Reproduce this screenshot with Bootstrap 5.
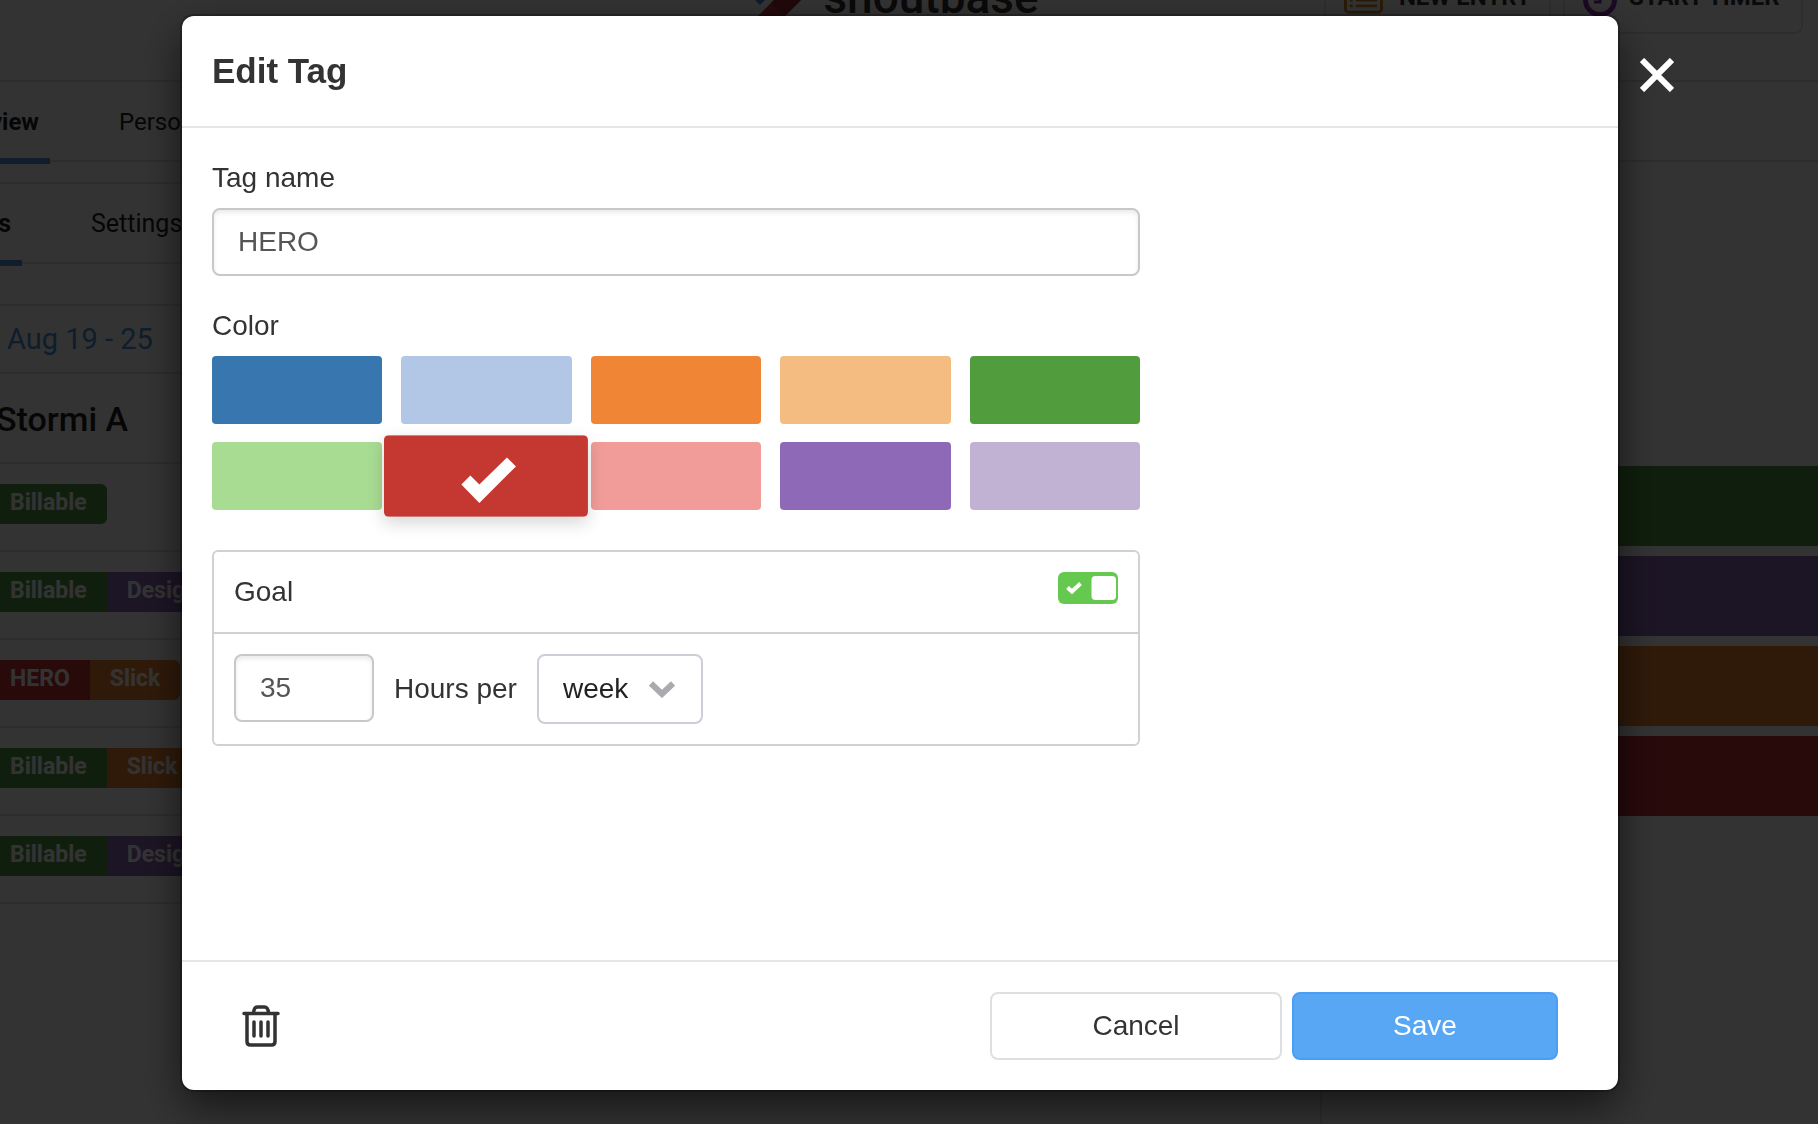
<!DOCTYPE html>
<html lang="en">
<head>
<meta charset="utf-8">
<meta name="viewport" content="width=device-width, initial-scale=1">
<title>Edit Tag</title>
<link href="https://cdn.jsdelivr.net/npm/bootstrap@5.3.0/dist/css/bootstrap.min.css" rel="stylesheet">
<style>
  body { font-family: "Liberation Sans", Arial, sans-serif; font-size: 28px; line-height: 40px; color: #333; overflow: hidden; }

  /* Page behind the dialog */
  .app-page { font-family: Roboto, "Noto Sans", sans-serif; color: #333; overflow: hidden; height: 100vh; }
  .app-header { height: 162px; margin-top: -80px; border-bottom: 2px solid #e2e2e2; padding: 0 15px; }
  .head-spacer { width: 451px; }
  .head-actions { gap: 12px; }
  .brand-name { font-size: 46px; font-weight: 500; line-height: 56px; color: #333; text-decoration: none; }
  .brand-name span { padding-bottom: 6px; }
  .head-btn { width: 227px; height: 68px; border: 2px solid #e2e2e2; border-radius: 8px; font-size: 24px; font-weight: 700; line-height: 32px; color: #333; text-transform: uppercase; white-space: nowrap; padding: 0 18px; }
  .head-btn span { padding-bottom: 6px; }
  .head-btn-wide { width: 240px; gap: 12px; }
  .tab-bar { height: 80px; border-bottom: 2px solid #e2e2e2; font-size: 24px; }
  .tab-bar a { color: #222; text-decoration: none; height: 82px; padding-top: 4px; border-bottom: 6px solid transparent; display: flex; align-items: center; }
  .tab-bar a.tab-on { font-weight: 700; border-bottom-color: #4a90d9; justify-content: flex-end; white-space: nowrap; overflow: hidden; padding-right: 11px; }
  .tab-wide { width: 50px; margin-right: 69px; }
  .tab-slim { width: 22px; margin-right: 69px; }
  .side-col { width: 1320px; }
  .sub-tabs { margin-top: 20px; border-top: 2px solid #e2e2e2; height: 82px; font-size: 25px; }
  .week-row { margin-top: 40px; height: 70px; border: solid #e2e2e2; border-width: 2px 0; color: #4a90d9; padding-left: 7px; font-size: 29px; line-height: 66px; }
  .person-row { height: 90px; border-bottom: 2px solid #e2e2e2; font-size: 34px; font-weight: 500; line-height: 90px; color: #222; }
  .person-row span { margin-left: -4px; }
  .tag-row { height: 88px; border-bottom: 2px solid #e2e2e2; padding-top: 20px; overflow: hidden; }
  .tag-set { margin-left: -10px; border-radius: 6px; overflow: hidden; height: 40px; }
  .tag-chip { padding: 0 20px; color: #fff; font-size: 23px; font-weight: 700; line-height: 38px; }
  .chart-col { border-left: 2px solid #e2e2e2; padding-top: 304px; gap: 10px; }
  .chart-bar { height: 80px; }
  .c-green { background: #519b41; } .c-purple { background: #8d69b8; }
  .c-orange { background: #ec8232; } .c-red { background: #c93238; }

  /* Dialog */
  .modal-backdrop { --bs-backdrop-opacity: .8; }
  .tag-modal { padding-right: 18px; }
  .tag-modal .modal-dialog { max-width: 1436px; margin: 16px auto; }
  .tag-modal .modal-content { min-height: calc(100vh - 50px); border: 0; border-radius: 12px; color: #333; box-shadow: 0 0 0 2px rgba(0,0,0,.25), 0 16px 44px rgba(0,0,0,.6); }
  .tag-modal .modal-header { padding: 0 30px; height: 112px; border-bottom: 2px solid #e5e5e5; }
  .tag-modal .modal-title { font-size: 35px; font-weight: 700; line-height: 48px; }
  .tag-modal .modal-body { padding: 30px; }
  .tag-modal .modal-footer { padding: 30px 60px; border-top: 2px solid #e5e5e5; }
  .tag-modal .modal-footer > * { margin: 0; }
  .close-x { position: absolute; left: 100%; top: 36px; margin-left: 16px; padding: 0; width: 46px; height: 46px; border: 0; background: none; line-height: 0; }

  .tag-form { max-width: 928px; }
  .field-label { display: block; margin-bottom: 10px; }
  .text-field { height: 68px; border: 2px solid #c8c8c8; border-radius: 8px; padding: 0 24px; font-size: 28px; line-height: 40px; color: #555; box-shadow: inset 0 3px 4px rgba(0,0,0,.08); }
  .name-field { margin-bottom: 30px; }
  .hours-field { width: 140px; }
  .period-field { width: 166px; height: 70px; border: 2px solid #ceced6; border-radius: 8px; padding: 0 0 0 24px; font-size: 28px; color: #222; background: #fff url("data:image/svg+xml,%3Csvg xmlns='http://www.w3.org/2000/svg' width='26' height='18' viewBox='0 0 26 18'%3E%3Cpath d='M2 3.500L13 14L24 3.500' fill='none' stroke='%23aaabae' stroke-width='6'/%3E%3C/svg%3E") no-repeat right 26px center; }

  .swatches { display: grid; grid-template-columns: repeat(5, 1fr); gap: 18px 19px; margin-bottom: 40px; }
  .swatch { appearance: none; margin: 0; width: 100%; height: 68px; border: 0; border-radius: 4px; background-color: var(--tint); }
  .swatch:checked { transform: scale(1.2); z-index: 1; position: relative; box-shadow: 0 5px 14px rgba(0,0,0,.16);
    background-image: url("data:image/svg+xml,%3Csvg xmlns='http://www.w3.org/2000/svg' width='60' height='50' viewBox='0 0 60 50'%3E%3Cpath d='M9.500 32L17 24.500L24.500 32L47.500 9.500L55 17L24.500 47.500Z' fill='%23fff'/%3E%3C/svg%3E"); background-repeat: no-repeat; background-position: center; background-size: 60px 50px; }

  .goal-box { border: 2px solid #d1d1d1; border-radius: 6px; }
  .goal-head { height: 82px; padding: 0 20px; border-bottom: 2px solid #d1d1d1; }
  .goal-row { padding: 20px; gap: 20px; }
  .goal-switch { appearance: none; margin: 0 0 8px; width: 60px; height: 32px; border-radius: 6px; background-color: #65c94f;
    background-image: url("data:image/svg+xml,%3Csvg xmlns='http://www.w3.org/2000/svg' width='60' height='32' viewBox='0 0 60 32'%3E%3Crect x='33.500' y='4' width='24.500' height='24' rx='4' fill='%23fff'/%3E%3Cpath d='M9.500 15.500L14 19.500L22.500 11.500' fill='none' stroke='%23fff' stroke-width='4'/%3E%3C/svg%3E"); }

  .foot-set { gap: 10px; }
  .foot-btn { height: 68px; border-width: 2px; border-radius: 8px; font-size: 28px; line-height: 40px; padding: 0 20px; }
  .foot-cancel { width: 292px; border-color: #dfdfe3; background: #fff; color: #333; }
  .foot-save { width: 266px; border-color: #4a9ff5; background: #57a7f5; color: #fff; }
  .foot-trash { border: 0; padding: 0; background: none; line-height: 0; color: #333; }
</style>
<script src="https://cdn.jsdelivr.net/npm/bootstrap@5.3.0/dist/js/bootstrap.bundle.min.js"></script>
</head>
<body>

<div class="app-page" aria-hidden="true">
  <header class="app-header d-flex align-items-center justify-content-between">
    <div class="head-spacer"></div>
    <a href="#" class="brand-name d-flex align-items-center gap-3">
      <svg width="56" height="52" viewBox="0 0 56 52"><path d="M-10 12L9 -7L28 12L9 31Z" fill="#3f8fd6"/><path d="M-3 52L38 11L56 20L24 52Z" fill="#c2303e"/><path d="M20 29L38 11L56 20L33 43Z" fill="#9d2a3a"/></svg>
      <span>shoutbase</span>
    </a>
    <div class="head-actions d-flex">
      <button class="head-btn d-flex align-items-center gap-3 bg-white" type="button">
        <svg width="40" height="28" viewBox="0 0 40 28" fill="none" stroke="#d58a2b" stroke-width="3"><rect x="1.500" y="1.500" width="37" height="25" rx="3"/><path d="M6 7h3m3 0h22M6 14h3m3 0h22M6 20h3m3 0h22"/></svg>
        <span>New entry</span>
      </button>
      <button class="head-btn head-btn-wide d-flex align-items-center bg-white" type="button">
        <svg width="34" height="34" viewBox="0 0 34 34" fill="none" stroke="#8a2bb0" stroke-width="5"><circle cx="17" cy="17" r="14.500"/><path d="M17 8v11h-6" stroke-width="3"/></svg>
        <span>Start timer</span>
      </button>
    </div>
  </header>

  <nav class="tab-bar d-flex">
    <a href="#" class="tab-on tab-wide">Overview</a>
    <a href="#">Personal</a>
  </nav>

  <div class="d-flex">
    <section class="side-col flex-shrink-0">
      <nav class="tab-bar sub-tabs d-flex">
        <a href="#" class="tab-on tab-slim">Tags</a>
        <a href="#">Settings</a>
      </nav>
      <div class="week-row">Aug 19 - 25</div>
      <div class="person-row"><span>Stormi A</span></div>
      <div class="tag-row d-flex"><div class="tag-set d-flex"><span class="tag-chip c-green">Billable</span></div></div>
      <div class="tag-row d-flex"><div class="tag-set d-flex"><span class="tag-chip c-green">Billable</span><span class="tag-chip c-purple">Design</span></div></div>
      <div class="tag-row d-flex"><div class="tag-set d-flex"><span class="tag-chip c-red">HERO</span><span class="tag-chip c-orange">Slick</span></div></div>
      <div class="tag-row d-flex"><div class="tag-set d-flex"><span class="tag-chip c-green">Billable</span><span class="tag-chip c-orange">Slick</span></div></div>
      <div class="tag-row d-flex"><div class="tag-set d-flex"><span class="tag-chip c-green">Billable</span><span class="tag-chip c-purple">Design</span></div></div>
    </section>
    <section class="chart-col flex-grow-1 d-flex flex-column vh-100">
      <div class="chart-bar c-green"></div>
      <div class="chart-bar c-purple"></div>
      <div class="chart-bar c-orange"></div>
      <div class="chart-bar c-red"></div>
    </section>
  </div>
</div>

<div class="modal-backdrop show"></div>

<div class="modal tag-modal show d-block" tabindex="-1" role="dialog" aria-labelledby="dialogTitle">
  <div class="modal-dialog">
    <form class="modal-content">
      <div class="modal-header">
        <h1 class="modal-title" id="dialogTitle">Edit Tag</h1>
        <button type="button" class="close-x" aria-label="Close">
          <svg width="34" height="34" viewBox="0 0 34 34"><path d="M2 2L32 32M32 2L2 32" stroke="#fff" stroke-width="6"/></svg>
        </button>
      </div>

      <div class="modal-body">
        <div class="tag-form">
          <label for="tagName" class="field-label">Tag name</label>
          <input type="text" id="tagName" class="form-control text-field name-field" value="HERO">

          <div class="field-label" id="colorLabel">Color</div>
          <div class="swatches" role="radiogroup" aria-labelledby="colorLabel">
            <input type="radio" name="color" class="swatch" aria-label="Blue" style="--tint:#3876af">
            <input type="radio" name="color" class="swatch" aria-label="Light blue" style="--tint:#b2c6e5">
            <input type="radio" name="color" class="swatch" aria-label="Orange" style="--tint:#f08535">
            <input type="radio" name="color" class="swatch" aria-label="Light orange" style="--tint:#f4bc81">
            <input type="radio" name="color" class="swatch" aria-label="Green" style="--tint:#519d3e">
            <input type="radio" name="color" class="swatch" aria-label="Light green" style="--tint:#a8dc93">
            <input type="radio" name="color" class="swatch" aria-label="Red" style="--tint:#c53832" checked>
            <input type="radio" name="color" class="swatch" aria-label="Pink" style="--tint:#f19c98">
            <input type="radio" name="color" class="swatch" aria-label="Purple" style="--tint:#8d69b8">
            <input type="radio" name="color" class="swatch" aria-label="Light purple" style="--tint:#c1b1d3">
          </div>

          <div class="goal-box">
            <div class="goal-head d-flex align-items-center justify-content-between">
              <label for="goalOn">Goal</label>
              <input type="checkbox" role="switch" id="goalOn" class="goal-switch" checked>
            </div>
            <div class="goal-row d-flex align-items-start">
              <input type="text" class="form-control text-field hours-field" id="goalHours" value="35" aria-label="Goal hours">
              <label for="goalPeriod" class="align-self-center">Hours per</label>
              <select id="goalPeriod" class="form-select period-field"><option>week</option><option>month</option></select>
            </div>
          </div>
        </div>
      </div>

      <div class="modal-footer d-flex flex-nowrap">
        <button type="button" class="foot-trash me-auto" aria-label="Delete tag">
          <svg width="38" height="42" viewBox="0 0 38 42" fill="none" stroke="currentColor" stroke-width="3.500" stroke-linecap="round"><path d="M5 9V36.500Q5 40 8.500 40H29.500Q33 40 33 36.500V9" stroke-linecap="butt"/><path d="M2 8.500H36M11.500 8Q12 2 15.500 2H22.500Q26 2 26.500 8M12 17V31M19 17V31M26 17V31"/></svg>
        </button>
        <div class="d-flex foot-set">
          <button type="button" class="btn foot-btn foot-cancel">Cancel</button>
          <button type="submit" class="btn foot-btn foot-save">Save</button>
        </div>
      </div>
    </form>
  </div>
</div>
</body>
</html>
